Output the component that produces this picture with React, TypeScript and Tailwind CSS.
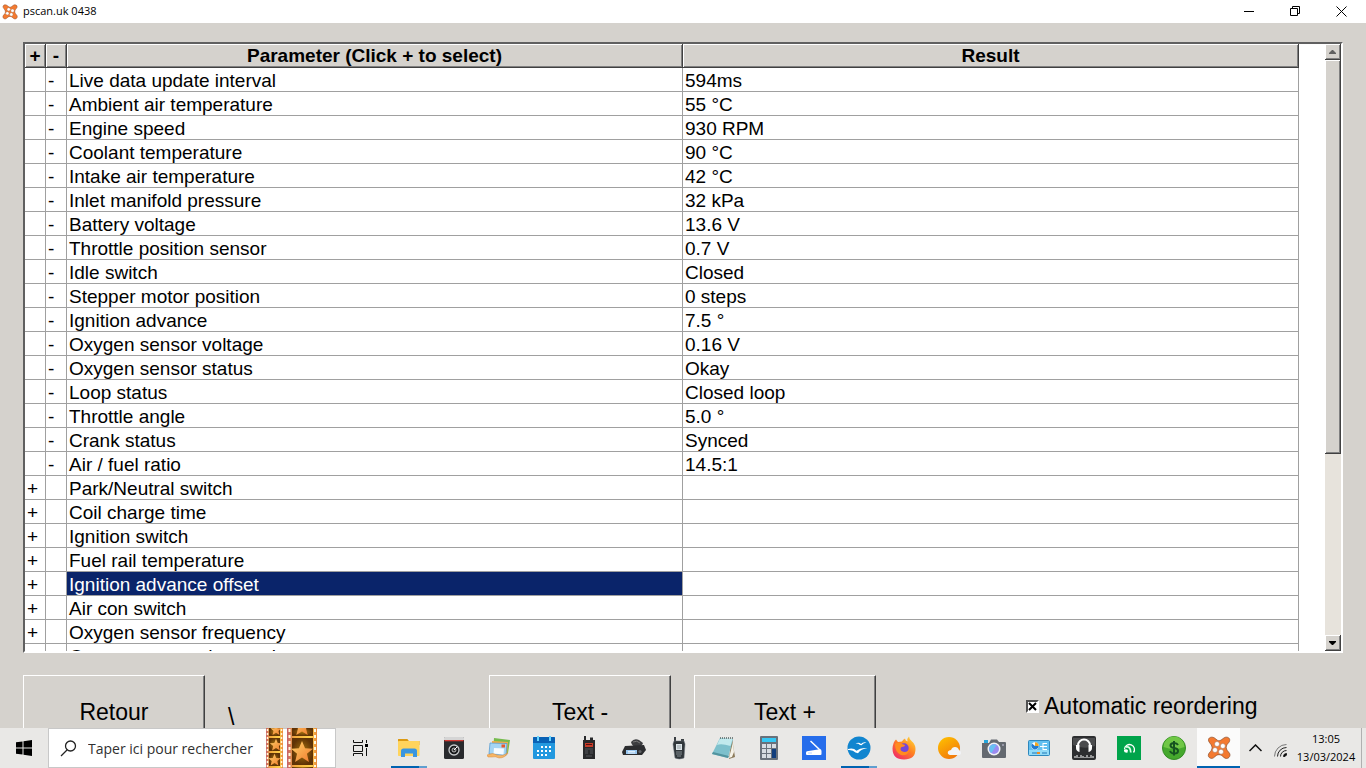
import { useState } from "react";
import type { ReactNode } from "react";

type Row = { name: string; value?: string };

const rows: Row[] = [
  { name: "Live data update interval", value: "594ms" },
  { name: "Ambient air temperature", value: "55 °C" },
  { name: "Engine speed", value: "930 RPM" },
  { name: "Coolant temperature", value: "90 °C" },
  { name: "Intake air temperature", value: "42 °C" },
  { name: "Inlet manifold pressure", value: "32 kPa" },
  { name: "Battery voltage", value: "13.6 V" },
  { name: "Throttle position sensor", value: "0.7 V" },
  { name: "Idle switch", value: "Closed" },
  { name: "Stepper motor position", value: "0 steps" },
  { name: "Ignition advance", value: "7.5 °" },
  { name: "Oxygen sensor voltage", value: "0.16 V" },
  { name: "Oxygen sensor status", value: "Okay" },
  { name: "Loop status", value: "Closed loop" },
  { name: "Throttle angle", value: "5.0 °" },
  { name: "Crank status", value: "Synced" },
  { name: "Air / fuel ratio", value: "14.5:1" },
  { name: "Park/Neutral switch" },
  { name: "Coil charge time" },
  { name: "Ignition switch" },
  { name: "Fuel rail temperature" },
  { name: "Ignition advance offset" },
  { name: "Air con switch" },
  { name: "Oxygen sensor frequency" },
  { name: "Oxygen sensor duty cycle" },
];

const Icon = ({ children }: { children: ReactNode }) => (
  <svg viewBox="0 0 24 24" className="size-6" aria-hidden="true">
    {children}
  </svg>
);

const PscanIcon = ({ className }: { className: string }) => (
  <svg viewBox="0 0 24 24" className={className} aria-hidden="true">
    <path
      d="M1.500 3.500C2 .8 6 .4 8.300 2.600l2 1.600c1.400.8 2.600.6 3.800-.2L17 1.900C19.500.2 23 1.500 22.700 4.300c0 1.700-1.500 2.700-2.600 4.200-1.300 2-1.100 4.200.2 6l2.200 2.800c1.300 2.200-.3 5.200-3 5.200-2.200 0-3.200-2-4.900-3.100-1.600-1-3.600-1-5.200 0L6.500 21.800c-2.200 1.500-5.200 0-5.200-2.500 0-2 1.900-3.200 3-4.900 1.200-2 .9-4-.3-5.800C3 7 1.200 5.600 1.500 3.500Z"
      fill="#f47a30"
      stroke="#8a4a28"
      strokeWidth="0.7"
    />
    <g fill="#fff" stroke="#9a6a50" strokeWidth="0.5">
      <circle cx="10" cy="8" r="2.500" />
      <circle cx="15.800" cy="10" r="2.500" />
      <circle cx="8" cy="14" r="2.500" />
      <circle cx="14" cy="15.700" r="2.500" />
    </g>
  </svg>
);

const STAR = "M0-10 2.800-3.400 10-3 4.500 1.600 6.300 9 0 5-6.300 9-4.500 1.600-10-3-2.800-3.400Z";

const FilmStrips = () => (
  <svg width="52" height="40" viewBox="0 0 52 40" aria-hidden="true">
    <defs>
      <linearGradient id="film" x1="0" y1="0" x2="1" y2="0">
        <stop offset="0" stopColor="#c4606c" />
        <stop offset="0.25" stopColor="#f2a93c" />
        <stop offset="0.8" stopColor="#ffd24a" />
        <stop offset="1" stopColor="#e8863c" />
      </linearGradient>
      <radialGradient id="frame">
        <stop offset="0" stopColor="#a8740f" />
        <stop offset="1" stopColor="#5f3306" />
      </radialGradient>
      <linearGradient id="star" x1="0" y1="0" x2="1" y2="1">
        <stop offset="0" stopColor="#ffd36b" />
        <stop offset="1" stopColor="#f0782c" />
      </linearGradient>
    </defs>
    <rect width="17" height="40" fill="url(#film)" />
    <rect x="21" width="30" height="40" fill="url(#film)" />
    <g fill="url(#frame)">
      <rect x="3" width="11" height="8" />
      <rect x="3" y="10" width="11" height="13" />
      <rect x="3" y="25" width="11" height="13" />
      <rect x="26" width="21" height="8" />
      <rect x="26" y="10" width="21" height="27" />
      <rect x="26" y="39" width="21" height="1" />
    </g>
    <g fill="url(#star)">
      <path d={STAR} transform="translate(10 2) scale(.55)" />
      <path d={STAR} transform="translate(10 17) scale(.62)" />
      <path d={STAR} transform="translate(8.500 32) scale(.62)" />
      <path d={STAR} transform="translate(36 -1) scale(.9)" />
      <path d={STAR} transform="translate(36 24) scale(1.100)" />
    </g>
    <g stroke="#fff8dc" strokeWidth="1.500" strokeDasharray="2 2">
      <path d="M1.500 1v38M15.500 1v38" />
      <path d="M23.500 1v38M49 1v38" strokeWidth="2" strokeDasharray="3 3" />
    </g>
  </svg>
);

type App = { name: string; state?: "open" | "active"; icon: ReactNode };

const apps: App[] = [
  {
    name: "Explorer",
    state: "open",
    icon: (
      <Icon>
        <path d="M1 4q0-1 1-1h8l2 2h10.500v4H1Z" fill="#dc9a12" />
        <rect x="1" y="5" width="21.500" height="15" rx=".7" fill="#ffd45c" />
        <path d="M1 5h8l1.500-1.500V3H2Q1 3 1 4Z" fill="#dc9a12" />
        <path d="M4 21v-6q0-2.500 2.500-2.500h11Q20 12.500 20 15v6h-4v-3.500H8V21Z" fill="#3a96e0" />
      </Icon>
    ),
  },
  {
    name: "Camera control",
    icon: (
      <Icon>
        <rect x="2" y="1" width="20" height="22" rx="1.500" fill="#292a2d" />
        <path d="M2 4V2q0-1 1-1h18q1 0 1 1v2Z" fill="#d5d5d5" />
        <path d="M2.500 4h19v1.300h-19Z" fill="#d43b34" />
        <circle cx="12" cy="14" r="5" fill="#17181a" stroke="#c8cacc" strokeWidth="1.300" />
        <circle cx="12" cy="14" r="2" fill="#333" stroke="#ddd" strokeWidth=".8" />
        <path d="m12 14 3-3" stroke="#fff" />
      </Icon>
    ),
  },
  {
    name: "Mail",
    icon: (
      <Icon>
        <path d="m7 2 16 2-2 13L6 15Z" fill="#76bb4e" />
        <path d="m5 5 16 1-1 13-15-2Z" fill="#f4ae4b" />
        <path d="m3 7 17 .5-1 12L2 18Z" fill="#a5d5f4" stroke="#4c95ce" strokeWidth=".7" />
        <path d="m7 12 10 .5-.5 6-10-1Z" fill="#f6fbff" />
        <path d="M14.500 8.500h3.500v3h-3.500Z" fill="#e65a2c" />
        <path d="M0 19q6-3 10 0 5 2 11-2-3 5-9 5-4-2-7-1H1Z" fill="#f6b666" stroke="#d88b3c" strokeWidth=".5" />
      </Icon>
    ),
  },
  {
    name: "Calendar",
    icon: (
      <Icon>
        <rect x="1" y="1" width="22" height="22" rx="1" fill="#2298df" />
        <path d="M1 2q0-1 1-1h20q1 0 1 1v5H1Z" fill="#0861b5" />
        <path d="M6 0v5M18 0v5" stroke="#68d6ff" strokeWidth="2" />
        <path
          d="M9 10h2v2H9Zm4 0h2v2h-2Zm4 0h2v2h-2ZM5 14h2v2H5Zm4 0h2v2H9Zm4 0h2v2h-2Zm4 0h2v2h-2ZM5 18h2v2H5Zm4 0h2v2H9Zm4 0h2v2h-2Z"
          fill="#fff"
        />
      </Icon>
    ),
  },
  {
    name: "Scanner",
    icon: (
      <Icon>
        <path d="M7 0h2v5H7ZM13 1.500h3V4h-3Z" fill="#28292b" />
        <path d="M6 4h12v19H6Z" fill="#28292b" />
        <path d="M8 7h8v4H8Z" fill="#c73c29" />
        <path d="M9 8.500h6" stroke="#551210" />
        <path d="M8 13h8M8 15h3m2 0h3M8 17h3m2 0h3M9 20h6" stroke="#616367" strokeWidth=".8" />
      </Icon>
    ),
  },
  {
    name: "Mobile radio",
    icon: (
      <Icon>
        <path d="M9 6q3-4 8-2l4 3q-1 4-6 4-5 0-6-5Z" fill="#3c3d40" />
        <path d="M11 6q4-2 7 1" stroke="#777" fill="none" />
        <path d="M3 10 22 9l2 5-4 5H1l-1-3Z" fill="#2c2d30" />
        <path d="M4 14h11v4H4Z" fill="#9ac8f1" />
        <path d="M6 15.500h7M6 17h7" stroke="#fff" strokeWidth=".7" />
        <circle cx="18" cy="15.500" r="1.600" fill="#606266" />
      </Icon>
    ),
  },
  {
    name: "Handheld radio",
    icon: (
      <Icon>
        <path d="M7 1h2v6H7ZM14 3h3v3h-3Z" fill="#393e42" />
        <path d="M7 5h10l1 3-1 14q-5 2-9 0L6 8Z" fill="#30363a" stroke="#68717a" strokeWidth=".5" />
        <path d="M9 8h6v6H9Z" fill="#dce4e8" />
        <path d="M10 10h4m-4 2h4" stroke="#7b878c" strokeWidth=".7" />
        <path d="M9 16h6m-6 2h6m-5 2h4" stroke="#9ba2a7" strokeWidth=".8" />
      </Icon>
    ),
  },
  {
    name: "Notepad",
    icon: (
      <Icon>
        <path d="m20 2 3 19-6 2 2-17Z" fill="#8b7959" />
        <path d="m8 2 13 1-5 19L0 18Z" fill="#7dc0cc" />
        <path d="M8 2.500 20.500 3l-2 7Q9 7 5 9Z" fill="#c1e9ed" />
        <path d="m0 18 16 4 1-2L1 16Z" fill="#52949f" />
        <path d="M8 2h13" stroke="#566" strokeDasharray="1 1" strokeWidth="1.500" />
        <path d="m21 6-4 16 3-1 2-5Z" fill="#f5f2e8" />
      </Icon>
    ),
  },
  {
    name: "Calculator",
    icon: (
      <Icon>
        <rect x="3" width="18" height="24" rx="1" fill="#69717b" />
        <path d="M5 2h14v4H5Z" fill="#36c8f4" />
        <path d="M5 8h4v4H5Zm5 0h4v4h-4Zm5 0h4v4h-4ZM5 13h4v4H5Zm5 0h4v4h-4ZM5 18h4v4H5Zm5 0h4v4h-4Z" fill="#d7dce2" />
        <path d="M15 13h4v9h-4Z" fill="#123e7d" />
      </Icon>
    ),
  },
  {
    name: "Scan",
    icon: (
      <Icon>
        <path d="M0 0h24v24H0Z" fill="#266deb" />
        <path d="m8.500 5 10 9.500" stroke="#fff" strokeWidth="1.500" />
        <path d="M4 16.500q0-1 1-1.200l12.500-2q2-.2 2 1.700v3q0 1-1 1H5q-1 0-1-1Z" fill="#fff" />
        <path d="M6 17h4" stroke="#9cc0ff" strokeWidth=".7" />
      </Icon>
    ),
  },
  {
    name: "OpenOffice",
    state: "open",
    icon: (
      <Icon>
        <circle cx="12" cy="12" r="11.500" fill="#1185cf" />
        <path
          d="M8.500 7.500q3.500-1.500 5.500.5 2-2.500 5.500-1.500-3.500.5-5 2.700l-1.500-.3q-1.500-1.500-4.500-1.400ZM1 13q5.500-1.500 8.500 1.800Q14 11 20.500 12.300q-6.500.5-9.500 5l-2.500-.7Q6 13.500 1 14Z"
          fill="#fff"
        />
      </Icon>
    ),
  },
  {
    name: "Firefox",
    icon: (
      <Icon>
        <defs>
          <linearGradient id="fox" x1="1" y1="0" x2="0.2" y2="1">
            <stop offset="0" stopColor="#ffe53b" />
            <stop offset="0.5" stopColor="#ff8120" />
            <stop offset="1" stopColor="#f02a69" />
          </linearGradient>
        </defs>
        <path
          d="M4 3.500 6 6l4-.5q1-2 3-3 0 2 2.500 3Q15 2 17 .5q0 2.500 3 5 3.500 3 3.500 7.500 0 10.500-11.500 10.500T.5 12.500Q1 6 4 3.500Z"
          fill="url(#fox)"
        />
        <circle cx="12" cy="12" r="4.700" fill="#7447d8" />
        <path d="M3 8q3.500-2.500 7 0l3 1q0 1.800-3.500 2-2 2 0 4 4 2.500 8-1-2 6.500-8.500 5-6-2.500-6-11Z" fill="#ff8b1f" />
      </Icon>
    ),
  },
  {
    name: "Weather",
    icon: (
      <Icon>
        <defs>
          <linearGradient id="sun" x1="0" y1="0" x2="0.6" y2="1">
            <stop offset="0" stopColor="#ffc400" />
            <stop offset="1" stopColor="#f27a0b" />
          </linearGradient>
        </defs>
        <circle cx="12" cy="12" r="11" fill="url(#sun)" />
        <path d="M13 19q-3-1-2-3.500Q12 14 14 14q1-3 4-3t4 3q2 1 2 3 0 2-3 2Z" fill="#f2f4f7" />
      </Icon>
    ),
  },
  {
    name: "Camera",
    icon: (
      <Icon>
        <path d="M2 4h4v3H2Z" fill="#25a5dc" />
        <path d="M0 7h7l2-3.500h6L17 6h6q1 0 1 1v14q0 1-1 1H1q-1 0-1-1Z" fill="#646970" />
        <circle cx="12" cy="13" r="6.500" fill="#f0f3f5" />
        <circle cx="12" cy="13" r="5" fill="#9a8bf0" />
        <path d="M7.500 11q2-4 7-2l-5 8q-3-2-2-6Z" fill="#67bff2" />
        <circle cx="21" cy="9" r="1" fill="#aab" />
      </Icon>
    ),
  },
  {
    name: "Control panel",
    icon: (
      <Icon>
        <rect x="1.500" y="4.500" width="21" height="15" rx="1" fill="#61bff0" stroke="#2d87bd" />
        <path d="M2 14h20v5H2Z" fill="#92dbf8" />
        <circle cx="8" cy="10" r="3.700" fill="#fff" />
        <path d="M8 10V6.300a3.700 3.700 0 0 1 3.700 3.700Z" fill="#f0a623" />
        <path d="M8 10h3.700A3.700 3.700 0 1 1 5 7.600Z" fill="#217bd0" />
        <path d="M16 7.500h4m-4 3h4m-4 3h4M13 10.500h3M16 7v7" stroke="#fff" />
        <path d="M5 17h6m4 0h5" stroke="#2179b5" strokeWidth="1.200" />
        <path d="M10 17h3" stroke="#f08c22" strokeWidth="2" />
      </Icon>
    ),
  },
  {
    name: "Audio",
    icon: (
      <Icon>
        <rect width="24" height="24" rx="2" fill="#2d2e30" />
        <path d="M1 2h22v8Q12 14 1 9Z" fill="#4b4c4e" />
        <path d="M6 14V9.500a6 6 0 0 1 12 0V14" fill="none" stroke="#fff" strokeWidth="2" />
        <path d="M4 9h3.500v7q-3.500-1-3.500-4Zm12.500 0H20v3q0 3-3.500 4Z" fill="#fff" />
        <path d="M3 22v-2m2 2v-3m2 3v-1m2 1v-3m2 3v-2m2 2v-1m2 1v-3m2 3v-1m2 1v-3m2 3v-2" stroke="#fff" />
      </Icon>
    ),
  },
  {
    name: "Signal",
    icon: (
      <Icon>
        <path d="M0 0h24v24H0Z" fill="#00a44b" />
        <path d="M7.500 13a5 5 0 1 1 9 3.500" fill="none" stroke="#fff" strokeWidth="1.300" />
        <path d="M9 11q4.500-1 4.800 5.500" fill="none" stroke="#d4ffe3" strokeWidth="1.800" />
        <path d="M7 13.500q3-1 4 .8l-.6 2.500q-3.400.2-3.400-1.800Z" fill="#fff" />
      </Icon>
    ),
  },
  {
    name: "Money",
    icon: (
      <Icon>
        <circle cx="12" cy="12" r="11.500" fill="#45a82d" stroke="#348d25" />
        <path d="M1.500 11a10.500 10.500 0 0 1 21 0q-10 4-21 0Z" fill="#70c746" />
        <path d="M16 9q-1-2-4-2-3.500 0-3.500 2.500 0 2 3.500 2.500 4 .5 4 3t-4 2.500q-3 0-4-2.500M12 5v14.500" fill="none" stroke="#155320" strokeWidth="2" />
      </Icon>
    ),
  },
  { name: "pscan", state: "active", icon: <PscanIcon className="size-6" /> },
];

// Raised 3D edge shared by the header cells and the scrollbar parts
const raised =
  "border-r border-b border-[#404040] bg-[#d5d2cd] shadow-[inset_1px_1px_0_#fff,inset_-1px_-1px_0_#808080]";

const bigButton =
  "flex h-[74px] w-[182px] shrink-0 items-center justify-center border border-t-white border-l-white border-r-[#404040] border-b-[#404040] text-[23px] shadow-[inset_-1px_-1px_0_#808080]";

const TitleBar = () => (
  <header className="flex h-[23px] shrink-0 items-center bg-white pr-[2px] pl-[2px] font-['Open_Sans',sans-serif]">
    <PscanIcon className="size-4" />
    <h1 className="ml-[5px] text-[11px]">pscan.uk 0438</h1>
    <div className="ml-auto flex h-full items-center">
      <button aria-label="Minimize" className="flex h-full w-[46px] items-center justify-center">
        <svg width="11" height="11" stroke="#000" fill="none">
          <path d="M0 5.500h10" />
        </svg>
      </button>
      <button aria-label="Restore" className="flex h-full w-[46px] items-center justify-center">
        <svg width="11" height="11" stroke="#000" fill="none">
          <path d="M.5 2.500h7v7h-7ZM2.500 2.500v-2h7v7h-2" />
        </svg>
      </button>
      <button aria-label="Close" className="flex h-full w-[46px] items-center justify-center">
        <svg width="11" height="11" stroke="#000" fill="none">
          <path d="m.5.5 10 10M10.500.5l-10 10" />
        </svg>
      </button>
    </div>
  </header>
);

const ScrollBar = () => (
  <div className="flex w-4 shrink-0 flex-col bg-[#e7e3dc]">
    <button aria-label="Scroll up" className={`flex h-4 shrink-0 items-center justify-center ${raised}`}>
      <svg width="7" height="4" fill="#606060">
        <path d="M3 0h1l3 3v1H0V3Z" />
      </svg>
    </button>
    <div className={`flex-[394] ${raised}`} />
    <div className="flex-[181]" />
    <button aria-label="Scroll down" className={`flex h-4 shrink-0 items-center justify-center ${raised}`}>
      <svg width="7" height="4" fill="#000">
        <path d="M0 0h7v1L4 4H3L0 1Z" />
      </svg>
    </button>
  </div>
);

const ParameterTable = () => {
  const [selected, setSelected] = useState("Ignition advance offset");
  const cell =
    "h-6 overflow-hidden border-r border-b border-[#a0a0a0] p-0 pt-[2px] pl-[2px] leading-[21px] whitespace-nowrap";

  return (
    <div className="flex min-h-0 flex-1 border-2 border-t-[#606060] border-r-white border-b-white border-l-[#606060] bg-white">
      <div className="mr-[26px] min-w-0 flex-1 overflow-hidden">
        <table className="w-full table-fixed border-separate border-spacing-0 text-[19px]">
          <colgroup>
            <col className="w-[21px]" />
            <col className="w-[21px]" />
            <col />
            <col />
          </colgroup>
          <thead>
            <tr>
              {["+", "-", "Parameter (Click + to select)", "Result"].map((title) => (
                <th key={title} className={`h-6 p-0 pt-px leading-[22px] font-bold ${raised}`}>
                  {title}
                </th>
              ))}
            </tr>
          </thead>
          <tbody>
            {rows.map(({ name, value }) => (
              <tr key={name} onClick={() => setSelected(name)}>
                <td className={cell}>{value ? "" : "+"}</td>
                <td className={cell}>{value ? "-" : ""}</td>
                <td className={`${cell} ${name === selected ? "bg-[#0a246a] text-white" : ""}`}>{name}</td>
                <td className={cell}>{value}</td>
              </tr>
            ))}
          </tbody>
        </table>
      </div>
      <ScrollBar />
    </div>
  );
};

const Controls = () => {
  const [reorder, setReorder] = useState(true);

  return (
    <div className="flex h-[75px] shrink-0 items-start overflow-hidden pt-[22px] text-[23px]">
      <button className={bigButton}>Retour</button>
      <div className="min-w-0 flex-[284]">
        <p className="mt-[26px] ml-[23px] leading-8">\</p>
      </div>
      <div className="flex gap-[23px]">
        <button className={bigButton}>Text -</button>
        <button className={bigButton}>Text +</button>
      </div>
      <div className="flex-[150]" />
      <label className="flex min-w-0 flex-[317] items-center gap-[5px] pt-[15px] leading-8">
        <span className="relative size-[13px] shrink-0">
          <input
            type="checkbox"
            checked={reorder}
            onChange={() => setReorder(!reorder)}
            className="block size-[13px] appearance-none border-2 border-t-[#505050] border-r-white border-b-white border-l-[#505050] bg-white"
          />
          {reorder && (
            <svg viewBox="0 0 13 13" className="pointer-events-none absolute inset-0" stroke="#000" strokeWidth="2">
              <path d="m3 3 7 7M10 3l-7 7" />
            </svg>
          )}
        </span>
        <span className="whitespace-nowrap">Automatic reordering</span>
      </label>
    </div>
  );
};

const Taskbar = () => (
  <footer className="flex h-10 shrink-0 bg-[#e9e8e6] font-['Open_Sans',sans-serif]">
    <button aria-label="Start" className="flex w-12 shrink-0 items-center justify-center">
      <svg width="16" height="16">
        <path d="M0 2.300 6.500 1.400V7.500H0ZM7.500 1.200 16 0v7.500H7.500ZM0 8.500h6.500v6.100L0 13.700ZM7.500 8.500H16V16l-8.500-1.200Z" />
      </svg>
    </button>
    <div className="flex w-[288px] shrink-0 items-center border border-[#c8c8c8] bg-white pl-[11px]">
      <svg width="17" height="17" fill="none" stroke="#222" strokeWidth="1.300" className="shrink-0">
        <circle cx="10.500" cy="6" r="5" />
        <path d="M7 10 1 16" />
      </svg>
      <input
        aria-label="Taper ici pour rechercher"
        placeholder="Taper ici pour rechercher"
        className="ml-[11px] w-[178px] text-[14px] outline-none placeholder:text-[#303030]"
      />
      <FilmStrips />
    </div>
    <button aria-label="Task view" className="flex w-12 shrink-0 items-center justify-center">
      <svg width="17" height="16" fill="none" stroke="#111">
        <path d="M1.500 0v2.500h9V0M1.500 5.500h9v6h-9ZM1.500 16v-2.500h9V16M14.500 0v3M14.500 8v8" />
        <path d="M13 4h3v3h-3Z" fill="#000" stroke="none" />
      </svg>
    </button>
    <nav className="ml-[2px] flex">
      {apps.map(({ name, state, icon }) => (
        <button
          key={name}
          aria-label={name}
          className="relative flex w-[45px] items-center justify-center"
        >
          {state === "active" && (
            <span className="absolute inset-x-px inset-y-0 border-b-2 border-[#0063b1] bg-[#fbfbfb]" />
          )}
          {state === "open" && (
            <span className="absolute bottom-0 left-[5px] h-[2px] w-9 border-r-8 border-[#5f9fd0] bg-[#0063b1]" />
          )}
          <span className="relative">{icon}</span>
        </button>
      ))}
    </nav>
    <div className="ml-auto flex items-center">
      <button aria-label="Show hidden icons">
        <svg width="13" height="8" fill="none" stroke="#111" strokeWidth="1.500" className="block">
          <path d="m.5 7 6-6 6 6" />
        </svg>
      </button>
      <svg width="13" height="13" fill="none" stroke="#222" className="mt-1 ml-3">
        <path d="M.5 12.500a12 12 0 0 1 12-12" stroke="#777" />
        <path d="M3.500 12.500a9 9 0 0 1 9-9M6.500 12.500a6 6 0 0 1 6-6" />
        <path d="M9.500 12.500a3 3 0 0 1 3-3v1.500l-1.500 1.500Z" fill="#000" />
      </svg>
      <div className="mr-1 ml-2 w-[62px] text-center text-[11px] leading-[18px]">
        <div>13:05</div>
        <div>13/03/2024</div>
      </div>
      <div className="h-full w-[5px] border-l border-[#b0b0b0]" />
    </div>
  </footer>
);

export default function App() {
  return (
    <div className="flex h-screen flex-col overflow-hidden bg-[#d5d2cd] font-['Liberation_Sans',Arial,sans-serif] text-black">
      <TitleBar />
      <main className="flex min-h-0 flex-1 flex-col px-[23px] pt-[19px]">
        <ParameterTable />
        <Controls />
      </main>
      <Taskbar />
    </div>
  );
}
